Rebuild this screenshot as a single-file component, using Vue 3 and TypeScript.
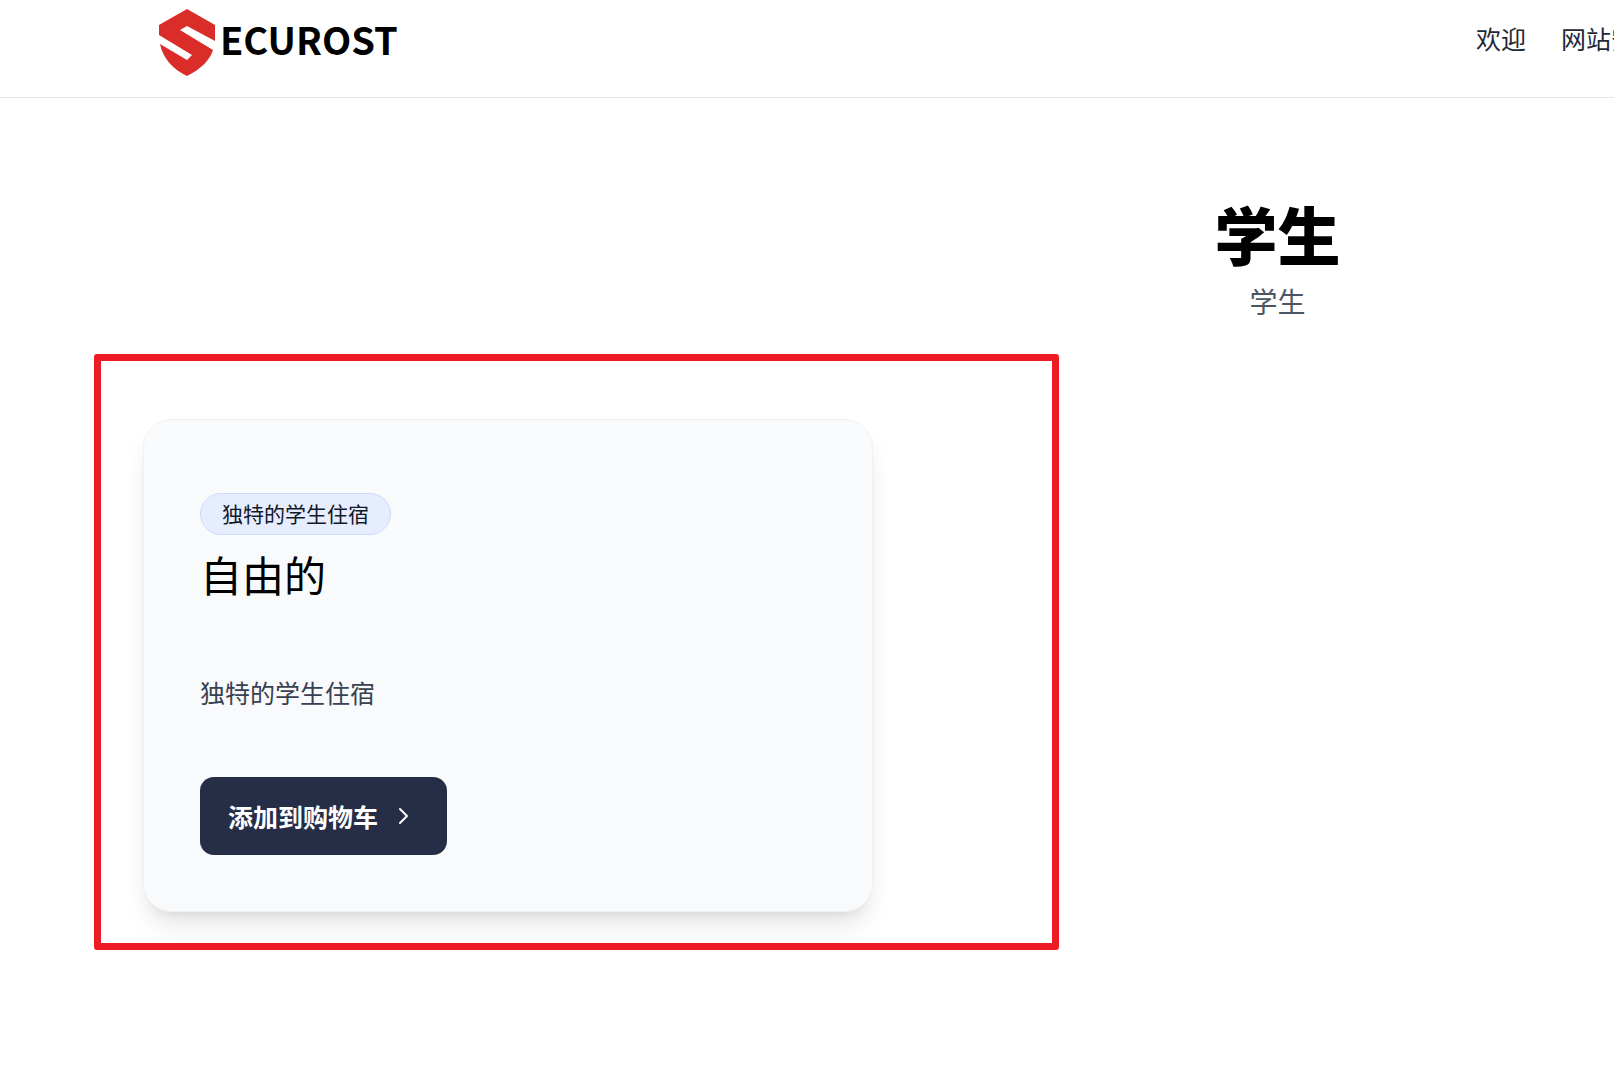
<script setup lang="ts">
interface NavItem {
  label: string
  href: string
}

const navItems: NavItem[] = [
  { label: '欢迎', href: '#welcome' },
  { label: '网站安全', href: '#security' },
]

const plan = {
  badge: '独特的学生住宿',
  title: '自由的',
  description: '独特的学生住宿',
  action: '添加到购物车',
}
</script>

<template>
  <div class="page">
    <header class="header">
      <a class="brand" href="#home">
        <svg class="shield" viewBox="0 0 56 67" aria-hidden="true">
          <path
            fill="#da2c28"
            d="M28 0 56 16V32L28 17 21 21 54 41C51 51 42 60 28 67 14 60 4 50 1 35L28 51 33 46 0 26V16Z"
          />
        </svg>
        <span class="wordmark">ECUROST</span>
      </a>
      <nav class="nav">
        <a v-for="item in navItems" :key="item.href" :href="item.href">{{ item.label }}</a>
      </nav>
    </header>

    <main>
      <div class="intro">
        <h1>学生</h1>
        <p>学生</p>
      </div>

      <section class="highlight">
        <article class="card">
          <span class="badge">{{ plan.badge }}</span>
          <h2>{{ plan.title }}</h2>
          <p class="description">{{ plan.description }}</p>
          <button class="action" type="button">
            {{ plan.action }}
            <svg class="chevron" viewBox="0 0 12 18" aria-hidden="true">
              <path d="M2 2 9 9 2 16" />
            </svg>
          </button>
        </article>
      </section>
    </main>
  </div>
</template>

<style>
body {
  margin: 0;
  background: #fff;
}
</style>

<style scoped>
.page {
  overflow: hidden;
  color: #000;
  font-family: 'Noto Sans CJK SC', sans-serif;
  font-weight: 400;
}

a {
  color: inherit;
  text-decoration: none;
}

h1,
h2,
p {
  margin: 0;
}

.header {
  display: flex;
  justify-content: space-between;
  align-items: flex-start;
  box-sizing: border-box;
  height: 98px;
  padding-left: 159px;
  border-bottom: 1px solid #e5e7eb;
}

.brand {
  display: flex;
  align-items: flex-start;
  gap: 5px;
  padding-top: 9px;
}

.shield {
  width: 56px;
  height: 67px;
}

.wordmark {
  font-size: 38px;
  font-weight: 700;
  line-height: 60px;
}

.nav {
  display: flex;
  flex: 0 0 138px;
  gap: 35px;
  overflow: hidden;
  padding-top: 17px;
  color: #1f2937;
  font-size: 25px;
  line-height: 42px;
  white-space: nowrap;
}

.nav a {
  flex: none;
}

.intro {
  width: 158.3vw;
  padding-top: 100px;
  text-align: center;
}

.intro h1 {
  font-size: 63px;
  font-weight: 900;
  line-height: 70px;
}

.intro p {
  margin-top: 12px;
  color: #4b5563;
  font-size: 28px;
  line-height: 42px;
}

.highlight {
  box-sizing: border-box;
  max-width: 965px;
  margin: 32px 0 0 94px;
  padding: 58px 42px 31px;
  border: 7px solid #ed1c24;
  border-radius: 3px;
}

.card {
  display: flex;
  flex-direction: column;
  align-items: flex-start;
  box-sizing: border-box;
  max-width: 730px;
  padding: 73px 56px 56px;
  border: 1px solid #f0f1f3;
  border-radius: 28px;
  background: #f9fafc;
  box-shadow:
    0 18px 26px -5px rgb(0 0 0 / 10%),
    0 7px 11px -7px rgb(0 0 0 / 10%);
}

.badge {
  padding: 0 21px 2px;
  border: 1px solid #ccdafd;
  border-radius: 21px;
  background: #e5edff;
  color: #111827;
  font-size: 21px;
  line-height: 38px;
}

.card h2 {
  margin-top: 14px;
  font-size: 42px;
  font-weight: 400;
  line-height: 50px;
}

.description {
  margin-top: 72px;
  color: #374151;
  font-size: 25px;
  line-height: 42px;
}

.action {
  display: flex;
  align-items: center;
  gap: 20px;
  margin-top: 64px;
  padding: 18px 37px 18px 28px;
  border: 0;
  border-radius: 14px;
  background: #252d47;
  color: #fff;
  font-family: inherit;
  font-size: 25px;
  font-weight: 700;
  line-height: 42px;
  cursor: pointer;
}

.chevron {
  width: 12px;
  height: 18px;
  fill: none;
  stroke: currentColor;
  stroke-width: 2;
  stroke-linecap: round;
  stroke-linejoin: round;
}
</style>
